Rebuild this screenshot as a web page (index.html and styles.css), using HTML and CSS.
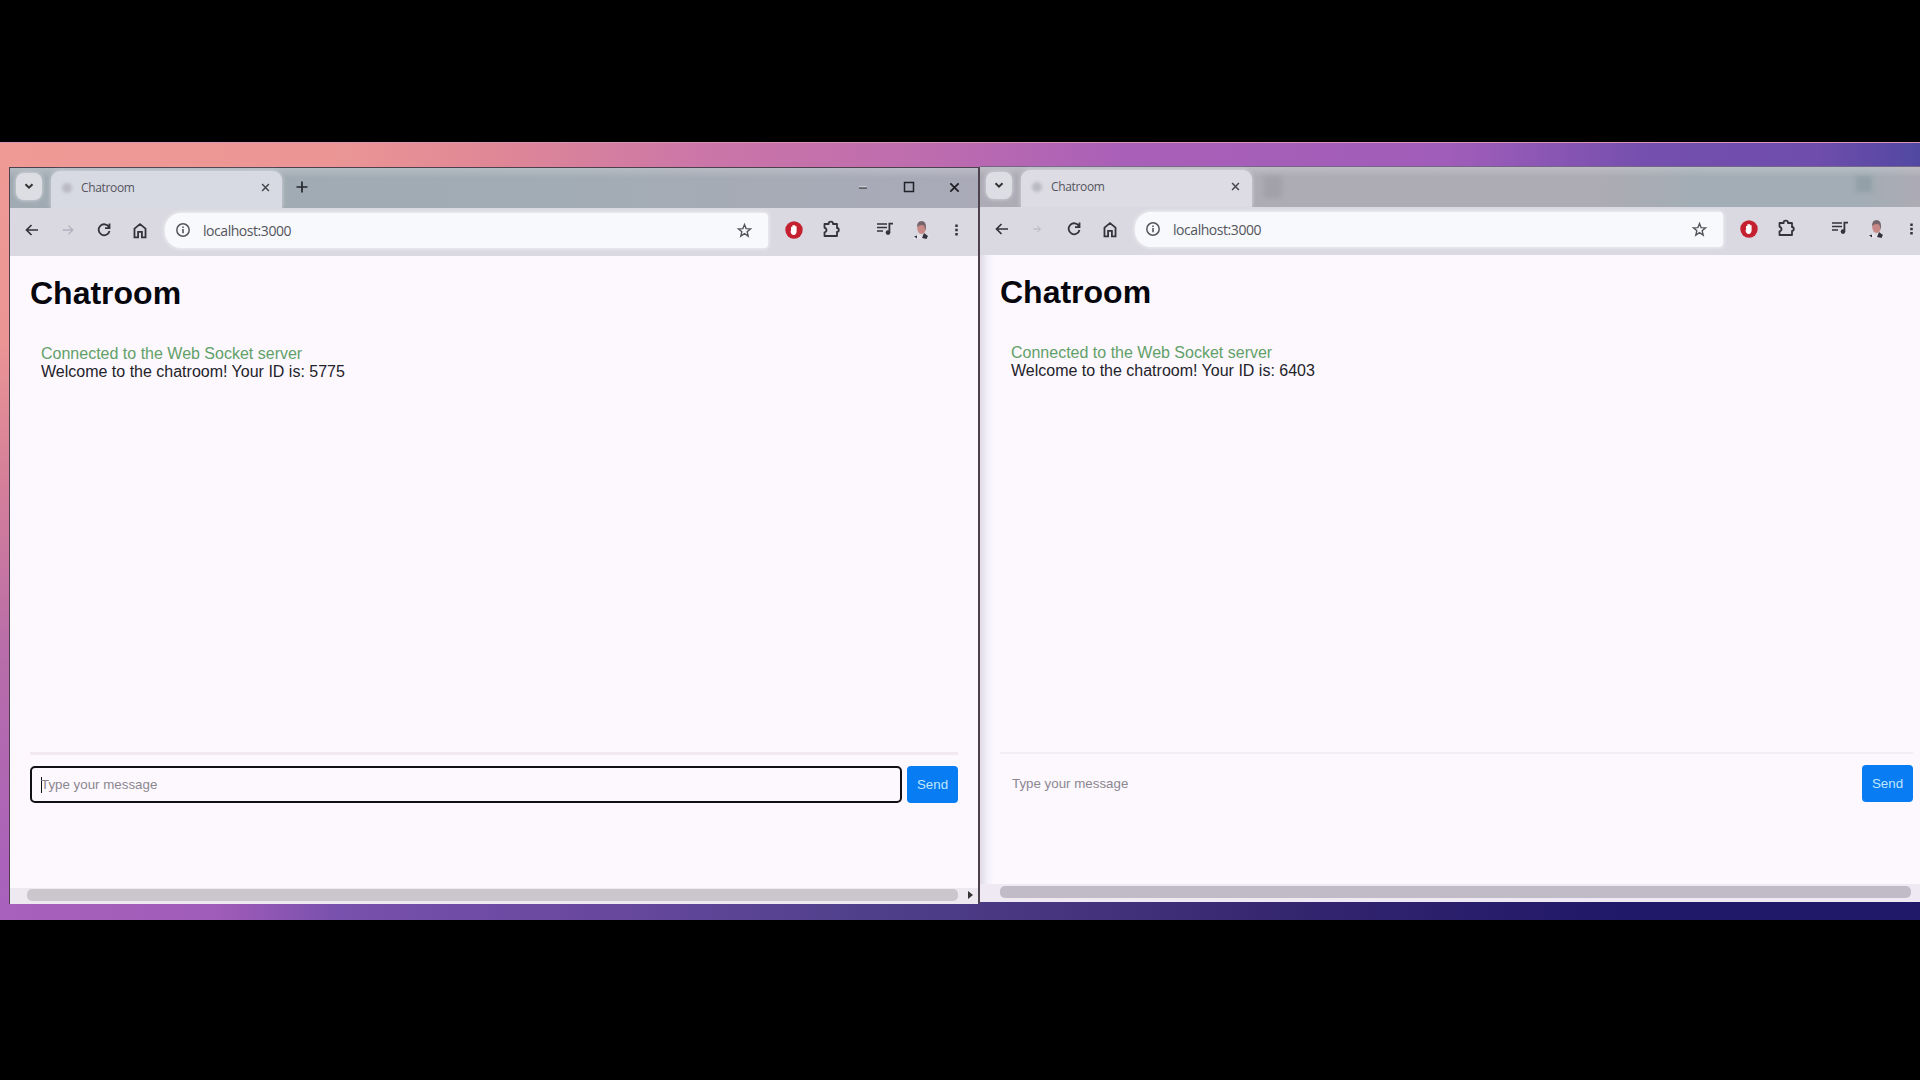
FILE: index.html
```html
<!DOCTYPE html>
<html lang="en">
<head>
<meta charset="utf-8">
<title>Chatroom</title>
<link rel="stylesheet" href="styles.css">
</head>
<body>
<svg class="defs" aria-hidden="true">
  <symbol id="chev" viewBox="0 0 10 10"><path d="M1.5 3.2 5 6.6 8.5 3.2" fill="none" stroke="currentColor" stroke-width="2"/></symbol>
  <symbol id="close" viewBox="0 0 10 10"><path d="M1.2 1.2 8.8 8.8M8.8 1.2 1.2 8.8" fill="none" stroke="currentColor" stroke-width="1.6"/></symbol>
  <symbol id="plus" viewBox="0 0 12 12"><path d="M6 .5v11M.5 6h11" fill="none" stroke="currentColor" stroke-width="1.7"/></symbol>
  <symbol id="min" viewBox="0 0 12 12"><path d="M2 6h8" stroke="#eee" stroke-width="1"/><path d="M2 7h8" stroke="currentColor" stroke-width="1"/></symbol>
  <symbol id="max" viewBox="0 0 12 12"><path d="M1.5 1.5h9v9h-9z" fill="none" stroke="currentColor" stroke-width="1.5"/></symbol>
  <symbol id="back" viewBox="0 0 16 16"><path d="M14 8H3M7.5 3 2.5 8l5 5" fill="none" stroke="currentColor" stroke-width="1.7"/></symbol>
  <symbol id="fwd" viewBox="0 0 16 16"><path d="M2 8h11M8.5 3l5 5-5 5" fill="none" stroke="currentColor" stroke-width="1.5"/></symbol>
  <symbol id="reload" viewBox="0 0 16 16"><path d="M13 5.2A5.5 5.5 0 1 0 13.5 9M13.5 1.5v4.6H9" fill="none" stroke="currentColor" stroke-width="1.8"/></symbol>
  <symbol id="home" viewBox="0 0 16 16"><path d="M2.8 6.2 8 2l5.2 4.2v8.3h-3.4V9.3H6.2v5.2H2.8z" fill="none" stroke="currentColor" stroke-width="1.7"/></symbol>
  <symbol id="info" viewBox="0 0 16 16"><circle cx="8" cy="8" r="6.2" fill="none" stroke="currentColor" stroke-width="1.5"/><path d="M8 7v4.3M8 4.5v1.5" stroke="currentColor" stroke-width="1.6"/></symbol>
  <symbol id="star" viewBox="0 0 16 16"><path d="M8 2.4l1.500 3.800 4.200.3-3.200 2.600 1 4.200L8 11l-3.500 2.300 1-4.200-3.200-2.600 4.200-.3z" fill="none" stroke="currentColor" stroke-width="1.300"/></symbol>
  <symbol id="block" viewBox="0 0 18 18"><circle cx="9" cy="9" r="8.700" fill="#c5202f"/><path d="M6 9.500V6.200q.7-.7 1.300 0V4.400q.8-.8 1.500 0 .8-.8 1.400 0v1q.9-.7 1.400.2v5.200q-.3 3-2.800 3.200Q6.200 14 5.500 10.500z" fill="#fff"/></symbol>
  <symbol id="puzzle" viewBox="0 0 18 18"><path d="M2.500 4h4.200q-.2-2.400 2.100-2.400T11 4h4v4q1.800.2 1.800 2T15 12v4H2.500v-3.700q2-.4 2-2.300t-2-2.200z" fill="none" stroke="currentColor" stroke-width="1.800" stroke-linejoin="round"/></symbol>
  <symbol id="music" viewBox="0 0 18 16"><path d="M1 3h10M1 6.500h10M1 10h6" fill="none" stroke="currentColor" stroke-width="1.700"/><path d="M13.400 11.500V2.600H17" fill="none" stroke="currentColor" stroke-width="1.800"/><circle cx="12" cy="11.600" r="2.300" fill="currentColor"/></symbol>
  <symbol id="person" viewBox="0 0 18 20"><path d="M1.500 19q1-4 5-4.500l3 2 4-3q3 1 3.500 4.500z" fill="#e9e4ec"/><path d="M10 18l2-5 4 3-1.500 3zM2 16.500l3-1v3z" fill="#35323f"/><ellipse cx="9.500" cy="8" rx="4.300" ry="6" fill="#c98986"/><path d="M5 7Q5 1 9.500 1T14 7l-.5 4-1-5q-3-2-6 0z" fill="#75656b"/></symbol>
  <symbol id="dots" viewBox="0 0 6 16"><path d="M1.500 1.500h3v3h-3zM1.500 6.500h3v3h-3zM1.500 11.500h3v3h-3z" fill="currentColor"/></symbol>
</svg>
<main class="desktop">
  <section class="window first">
    <header class="tabstrip">
      <button class="tabsearch"><svg width="10" height="10"><use href="#chev"/></svg></button>
      <div class="tab"><i class="favicon"></i><span>Chatroom</span><svg width="9" height="9"><use href="#close"/></svg></div>
      <svg class="newtab" width="12" height="12"><use href="#plus"/></svg>
      <div class="controls"><svg width="12" height="12"><use href="#min"/></svg><svg width="12" height="12"><use href="#max"/></svg><svg width="11" height="11"><use href="#close"/></svg></div>
    </header>
    <nav class="toolbar">
      <svg class="slot"><use href="#back" width="16" height="16" x="10" y="10"/></svg>
      <svg class="slot off"><use href="#fwd" width="14" height="14" x="11" y="11"/></svg>
      <svg class="slot"><use href="#reload" width="16" height="16" x="10" y="10"/></svg>
      <svg class="slot"><use href="#home" width="17" height="17" x="9.500" y="10"/></svg>
      <div class="address"><svg width="16" height="16"><use href="#info"/></svg><span>localhost:3000</span><svg class="star" width="17" height="17"><use href="#star"/></svg></div>
      <svg class="slot"><use href="#block" width="18" height="18" x="9" y="9"/></svg>
      <svg class="slot"><use href="#puzzle" width="18" height="18" x="10" y="8"/></svg>
      <svg class="slot apart"><use href="#music" width="18" height="16" x="10" y="9"/></svg>
      <svg class="slot"><use href="#person" width="18" height="20" x="10" y="8"/></svg>
      <svg class="slot"><use href="#dots" width="5" height="14" x="16" y="11"/></svg>
    </nav>
    <div class="page">
      <h1>Chatroom</h1>
      <div class="messages"><p class="ok">Connected to the Web Socket server</p><p>Welcome to the chatroom! Your ID is: 5775</p></div>
      <form class="composer"><div class="field"><i class="caret"></i>Type your message</div><button type="button" class="send">Send</button></form>
      <div class="scroll"><i class="thumb"></i><i class="arrow"></i></div>
    </div>
  </section>
  <section class="window second">
    <header class="tabstrip">
      <button class="tabsearch"><svg width="10" height="10"><use href="#chev"/></svg></button>
      <div class="tab"><i class="favicon"></i><span>Chatroom</span><svg width="9" height="9"><use href="#close"/></svg></div>
      <i class="smudge"></i>
      <i class="smudge end"></i>
    </header>
    <nav class="toolbar">
      <svg class="slot"><use href="#back" width="16" height="16" x="10" y="10"/></svg>
      <svg class="slot off"><use href="#fwd" width="10" height="10" x="12" y="13"/></svg>
      <svg class="slot"><use href="#reload" width="16" height="16" x="10" y="10"/></svg>
      <svg class="slot"><use href="#home" width="17" height="17" x="9.500" y="10"/></svg>
      <div class="address"><svg width="16" height="16"><use href="#info"/></svg><span>localhost:3000</span><svg class="star" width="17" height="17"><use href="#star"/></svg></div>
      <svg class="slot"><use href="#block" width="18" height="18" x="9" y="9"/></svg>
      <svg class="slot"><use href="#puzzle" width="18" height="18" x="10" y="8"/></svg>
      <svg class="slot apart"><use href="#music" width="18" height="16" x="10" y="9"/></svg>
      <svg class="slot"><use href="#person" width="18" height="20" x="10" y="8"/></svg>
      <svg class="slot"><use href="#dots" width="5" height="14" x="16" y="11"/></svg>
    </nav>
    <div class="page">
      <h1>Chatroom</h1>
      <div class="messages"><p class="ok">Connected to the Web Socket server</p><p>Welcome to the chatroom! Your ID is: 6403</p></div>
      <form class="composer"><div class="field">Type your message</div><button type="button" class="send">Send</button></form>
      <div class="scroll"><i class="thumb"></i></div>
    </div>
  </section>
</main>
</body>
</html>
```
FILE: styles.css
```css
* { box-sizing: border-box; }
body {
  margin: 0;
  height: 1080px;
  padding-top: 142px;
  background: #000;
  overflow: hidden;
  font-family: "Liberation Sans", Arial, sans-serif;
}
svg { display: block; flex: none; }
button { border: 0; padding: 0; font: inherit; }
.defs { display: none; }

.desktop {
  display: flex;
  align-items: flex-start;
  height: 778px;
  padding: 24px 0 0 9px;
  overflow: hidden;
  background:
    linear-gradient(90deg, #ef9a95 0, #eb9695 330px, #df8796 500px, #cb76a8 700px, #bd6cae 930px, #a95fb8 1130px, #a05db9 1450px, #744fae 1650px, #6e4dac 1820px, #5148a2 1920px) 0 0 / 100% 25px no-repeat,
    linear-gradient(90deg, #a861bd 0, #9f5cb8 220px, #7850ad 340px, #65479b 640px, #50408c 850px, #47357f 1050px, #34256f 1300px, #201868 1620px) 0 100% / 100% 20px no-repeat,
    linear-gradient(#ef9a95 0, #eb9595 200px, #d57f9a 340px, #b76caa 520px, #a861bd 760px);
  box-shadow: inset 0 1px #d895b5;
}

.window {
  flex: none;
  display: flex;
  flex-direction: column;
  background: #fcf8fe;
}
.first {
  width: 971px;
  height: 737px;
  margin-top: 1px;
  border: solid #4d414e;
  border-width: 1px 2px 0 1px;
}
.second { width: 953px; height: 736px; border-top: 1px solid #746587; }

.tabstrip {
  display: flex;
  align-items: center;
  height: 40px;
}
.first .tabstrip { background: linear-gradient(#ffffff35, #ffffff00 10px), linear-gradient(90deg, #a0aab2 0, #a2acb4 550px, #aaaab8 100%); }
.second .tabstrip { background: linear-gradient(#ffffff35, #ffffff00 10px), linear-gradient(90deg, #adabb5 0, #adabb3 620px, #a2adb5 720px, #a2adb5 880px, #adabb5 940px); }
.tabsearch {
  display: grid;
  place-items: center;
  width: 26px;
  height: 27px;
  margin: 0 9px 4px 6px;
  border-radius: 8px;
  color: #333;
  background: #dddde4;
  box-shadow: 0 0 4px #dddde4;
}
.tab {
  display: flex;
  align-items: center;
  align-self: stretch;
  width: 231px;
  margin-top: 3px;
  padding: 0 12px 4px 11px;
  border-radius: 9px 9px 0 0;
  background: #d8dae3;
  box-shadow: 0 0 4px #d8dae3;
  font: 12px "Open Sans", sans-serif;
  letter-spacing: -.35px;
  color: #55545d;
}
.second .tab { background: #dddce4; }
.favicon {
  width: 10px;
  height: 10px;
  margin-right: 9px;
  border-radius: 5px;
  background: #b9bac4;
  filter: blur(1.5px);
}
.tab svg { margin-left: auto; color: #44434b; }
.newtab { margin: 0 0 2px 14px; color: #26262d; }
.controls { display: flex; align-items: center; gap: 34px; margin: 0 18px 2px auto; color: #202027; }
.smudge { width: 18px; height: 22px; margin-left: 12px; background: #a2a1aa; filter: blur(2px); }
.smudge.end { margin-left: 574px; width: 16px; height: 16px; margin-bottom: 6px; background: #93a0a7; }

.toolbar {
  position: relative;
  display: flex;
  align-items: center;
  height: 48px;
  padding: 0 4px 4px;
  color: #34333c;
  background: #dad9e1;
}
.slot { width: 36px; height: 36px; }
.slot.apart { margin-left: 18px; }
.slot.off { color: #b1b0bd; }
.address {
  flex: 1;
  display: flex;
  align-items: center;
  height: 35px;
  margin: 0 8px 0 7px;
  padding: 0 15px 0 10px;
  border-radius: 16px 4px 4px 16px;
  background: #f8f9fd;
  box-shadow: 0 0 4px #f8f9fd;
  font: 14px "Open Sans", sans-serif;
  letter-spacing: -.45px;
  color: #55555c;
}
.address span { margin-left: 12px; }
.star { margin-left: auto; }

.page { flex: 1; display: flex; flex-direction: column; }
.second .page { background: linear-gradient(90deg, #dedbe5 0, #f5f1f9 8px, #fcf8fe 14px); }
h1 { margin: 19px 0 0 20px; font-size: 32px; line-height: 36px; color: #07060d; }
.messages {
  height: 411px;
  margin: 33px 20px 0;
  padding: 1px 11px 0;
  border-bottom: 3px solid #f3e9f1;
  font-size: 16px;
  line-height: 18px;
  color: #24232a;
}
.second .messages { border-bottom: 2px solid #f3eef6; }
.messages p { margin: 0; }
.messages .ok { color: #62a068; }
.composer { display: flex; gap: 5px; margin: 11px 20px 0; font-size: 13.333px; }
.field {
  flex: 1;
  display: flex;
  align-items: center;
  height: 37px;
  padding-left: 9px;
  border: 2px solid #111015;
  border-radius: 5px;
  color: #8b8790;
}
.second .field { padding-left: 10px; border-color: transparent; }
.caret { width: 1px; height: 16px; margin-right: -1px; background: #111; }
.send { width: 51px; height: 37px; border-radius: 4px; background: #087cf2; color: #c1e6ff; }
.scroll {
  display: flex;
  align-items: center;
  height: 16px;
  margin-top: auto;
  padding: 0 5px 2px 17px;
  background: #eee9f0;
}
.thumb { flex: 1; height: 12px; border-radius: 5px; background: #cbc6cc; }
.arrow { margin-left: 10px; border: solid transparent; border-width: 4px 0 4px 5px; border-left-color: #333; }
.second .scroll { height: 18px; padding: 0 22px 3px 20px; background: #eee9f2; }
.second .thumb { background: #c1bbc7; }
```
